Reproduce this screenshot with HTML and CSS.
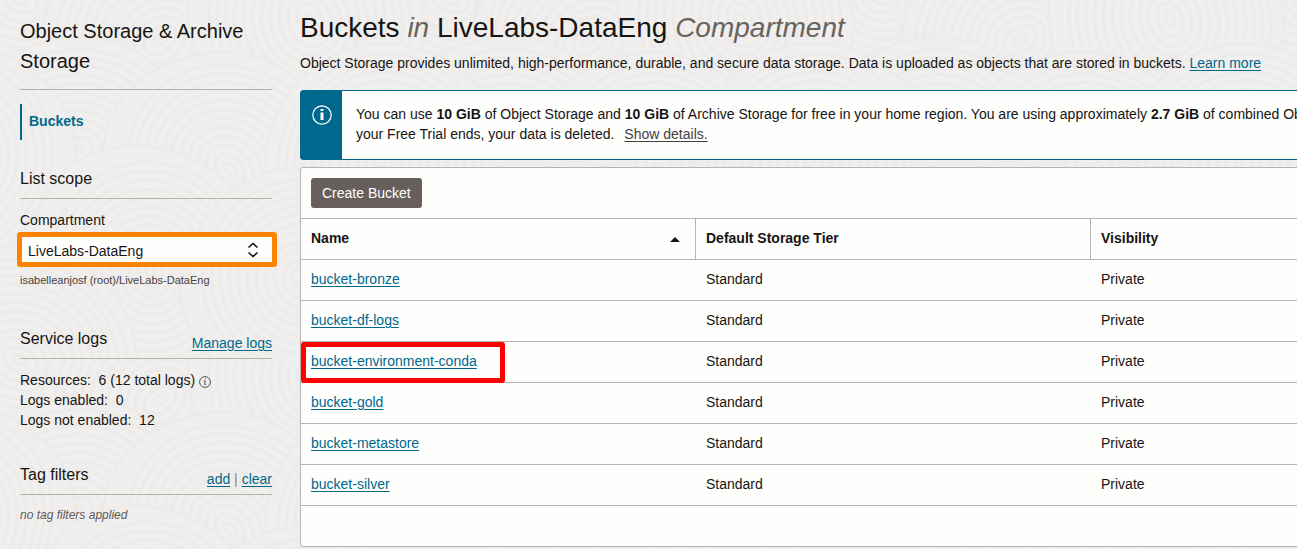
FILE: index.html
```html
<!DOCTYPE html>
<html lang="en">
<head>
<meta charset="utf-8">
<title>Object Storage buckets</title>
<link rel="stylesheet" href="styles.css">
</head>
<body>
<svg class="backdrop" aria-hidden="true">
  <defs>
    <g id="ripple" fill="none" stroke="#edebe9" stroke-width="3">
      <path fill="#f1efed" d="M-126 8C-120-70-60-118 10-112S124-50 118 20 60 128-10 120-132 70-126 8z"/>
      <ellipse rx="108" ry="100"/><ellipse rx="99" ry="92"/><ellipse rx="90" ry="84"/><ellipse rx="81" ry="75"/><ellipse rx="72" ry="66"/><ellipse rx="63" ry="57"/><ellipse rx="54" ry="48"/><ellipse rx="45" ry="39"/><ellipse rx="36" ry="30"/><ellipse rx="27" ry="21"/><ellipse rx="18" ry="12"/><ellipse rx="8" ry="4"/>
    </g>
    <pattern id="waves" width="430" height="360" patternUnits="userSpaceOnUse">
      <use href="#ripple" transform="translate(20 0) rotate(20)"/><use href="#ripple" transform="translate(450 0) rotate(20)"/>
      <use href="#ripple" transform="translate(160 40) rotate(-35)"/>
      <use href="#ripple" transform="translate(310 20) rotate(70)"/>
      <use href="#ripple" transform="translate(75 150) rotate(-15)"/><use href="#ripple" transform="translate(505 150) rotate(-15)"/>
      <use href="#ripple" transform="translate(230 170) rotate(50)"/>
      <use href="#ripple" transform="translate(380 160) rotate(-60)"/><use href="#ripple" transform="translate(-50 160) rotate(-60)"/>
      <use href="#ripple" transform="translate(150 270) rotate(80)"/>
      <use href="#ripple" transform="translate(310 280) rotate(10)"/>
      <use href="#ripple" transform="translate(20 360) rotate(20)"/><use href="#ripple" transform="translate(450 360) rotate(20)"/>
    </pattern>
  </defs>
  <rect width="100%" height="100%" fill="url(#waves)"/>
</svg>
<div class="layout">
  <aside class="sidebar">
    <h2 class="service-title">Object Storage &amp; Archive Storage</h2>
    <nav class="service-nav"><a class="nav-link" href="#">Buckets</a></nav>

    <section class="scope">
      <div class="section-head"><h3>List scope</h3></div>
      <label class="field-label" for="compartment">Compartment</label>
      <div class="select-box">
        <select id="compartment"><option>LiveLabs-DataEng</option></select>
        <svg class="chevrons" viewBox="0 0 12 16" aria-hidden="true"><path d="M1.500 5.500 6 1.500l4.500 4M1.500 10.500l4.500 4 4.500-4"/></svg>
      </div>
      <p class="path">isabelleanjosf (root)/LiveLabs-DataEng</p>
    </section>

    <section class="logs">
      <div class="section-head"><h3>Service logs</h3><div class="actions"><a href="#">Manage logs</a></div></div>
      <ul class="stats">
        <li>Resources:&nbsp; 6 (12 total logs)
          <svg class="info-small" viewBox="0 0 12 12" aria-hidden="true"><circle cx="6" cy="6" r="5.400"/><path d="M4.800 5h1.500L5.600 8.600h1.300M6 3h1"/></svg></li>
        <li>Logs enabled:&nbsp; 0</li>
        <li>Logs not enabled:&nbsp; 12</li>
      </ul>
    </section>

    <section class="tags">
      <div class="section-head"><h3>Tag filters</h3><div class="actions"><a href="#">add</a> <span class="bar">|</span> <a href="#">clear</a></div></div>
      <p class="empty">no tag filters applied</p>
    </section>
  </aside>

  <main class="content">
    <h1>Buckets <em>in</em> LiveLabs-DataEng <em>Compartment</em></h1>
    <p class="intro">Object Storage provides unlimited, high-performance, durable, and secure data storage. Data is uploaded as objects that are stored in buckets. <a href="#">Learn more</a></p>

    <div class="banner">
      <div class="banner-icon">
        <svg viewBox="0 0 20 20" aria-hidden="true"><circle cx="10" cy="10" r="9.200"/><path d="M10 7.500v7.500M10 4v2"/></svg>
      </div>
      <p class="banner-text">You can use <b>10 GiB</b> of Object Storage and <b>10 GiB</b> of Archive Storage for free in your home region. You are using approximately <b>2.7 GiB</b> of combined Object<br>your Free Trial ends, your data is deleted.<a class="details" href="#">Show details.</a></p>
    </div>

    <div class="panel">
      <div class="toolbar"><button class="create" type="button">Create Bucket</button></div>
      <table>
        <thead>
          <tr>
            <th scope="col"><div class="sortable">Name <svg class="sort" viewBox="0 0 10 5" aria-hidden="true"><path d="M0 5 5 0l5 5z"/></svg></div></th>
            <th scope="col">Default Storage Tier</th>
            <th scope="col">Visibility</th>
          </tr>
        </thead>
        <tbody>
          <tr><td><a href="#">bucket-bronze</a></td><td>Standard</td><td>Private</td></tr>
          <tr><td><a href="#">bucket-df-logs</a></td><td>Standard</td><td>Private</td></tr>
          <tr><td class="marked"><a href="#">bucket-environment-conda</a></td><td>Standard</td><td>Private</td></tr>
          <tr><td><a href="#">bucket-gold</a></td><td>Standard</td><td>Private</td></tr>
          <tr><td><a href="#">bucket-metastore</a></td><td>Standard</td><td>Private</td></tr>
          <tr><td><a href="#">bucket-silver</a></td><td>Standard</td><td>Private</td></tr>
        </tbody>
      </table>
      <div class="panel-foot"></div>
    </div>
  </main>
</div>
</body>
</html>
```
FILE: styles.css
```css
*, *::after { box-sizing: border-box; }

body {
  margin: 0;
  background: #f1efed;
  color: #161513;
  font: 14px/20px "Liberation Sans", Arial, sans-serif;
}

h1, h2, h3, p, ul { margin: 0; padding: 0; font-weight: 400; }
ul { list-style: none; }
a { color: #00688c; text-decoration: underline; text-underline-offset: 2px; }

.backdrop {
  position: absolute;
  inset: 0;
  width: 100%;
  height: 100%;
  z-index: -1;
}

.layout {
  display: grid;
  grid-template-columns: 252px minmax(0, 1fr);
  column-gap: 28px;
  padding-left: 20px;
  overflow: hidden;
}

.sidebar { padding-top: 16px; }

.service-title {
  font-size: 20px;
  line-height: 30px;
  padding-bottom: 13px;
  border-bottom: 1px solid #b5b1ad;
}

.service-nav { margin-top: 14px; }

.nav-link {
  display: block;
  padding: 7px 0 9px 7px;
  border-left: 2px solid #00688c;
  font-weight: 700;
  text-decoration: none;
}

.scope { margin-top: 29px; }

.section-head {
  display: flex;
  justify-content: space-between;
  border-bottom: 1px solid #b9b4aa;
}

.section-head h3 {
  font-size: 16px;
  line-height: 20px;
  padding-bottom: 9px;
}

.section-head .actions { padding-top: 4px; }
.bar { color: #8a8580; }

.field-label { display: block; margin-top: 11px; }

.select-box {
  display: grid;
  align-items: center;
  margin: 2px -5px 0 -3px;
  border: 5px solid #ff8200;
  border-radius: 3px;
  background: #fefefd;
}

.select-box select,
.chevrons { grid-area: 1 / 1; }

.select-box select {
  appearance: none;
  width: 100%;
  height: 25px;
  padding: 2px 6px 0;
  border: 0;
  background: transparent;
  color: inherit;
  font: inherit;
}

.chevrons {
  justify-self: end;
  width: 12px;
  height: 16px;
  margin-right: 13px;
  fill: none;
  stroke: #161513;
  stroke-width: 1.6;
  pointer-events: none;
}

.path { margin-top: 4px; font-size: 11px; line-height: 18px; color: #45413d; }

.logs { margin-top: 40px; }
.stats { margin-top: 11px; }

.info-small {
  width: 12px;
  height: 12px;
  vertical-align: -3px;
  fill: none;
  stroke: #55504c;
  stroke-width: 1;
}

.tags { margin-top: 35px; }
.empty { margin-top: 10px; font-size: 12px; font-style: italic; color: #5f5a56; }

.content { padding-top: 12px; }

h1 { font-size: 28px; line-height: 32px; white-space: nowrap; }
h1 em { color: #68635f; }
.intro { margin-top: 9px; white-space: nowrap; }

.banner {
  display: flex;
  min-width: 1187px;
  margin-top: 17px;
  border: 1px solid #00688c;
  border-radius: 3px;
  background: #fefefd;
}

.banner-icon { width: 41px; padding: 14px 0 0 11px; background: #00688c; }

.banner-icon svg {
  display: block;
  width: 20px;
  height: 20px;
  fill: none;
  stroke: #fff;
  stroke-width: 1.2;
}

.banner-icon path { stroke-width: 3; }
.banner-text { padding: 13px 14px 15px; white-space: nowrap; }
.details { margin-left: 10px; color: #45413d; }

.panel {
  min-width: 1187px;
  margin-top: 7px;
  border: 1px solid #b5b4b1;
  border-radius: 3px;
  background: #fefefd;
}

.toolbar { padding: 10px; }

.create {
  display: block;
  height: 30px;
  padding: 0 11px;
  border: 0;
  border-radius: 3px;
  background: #675f5b;
  color: #fff;
  font: inherit;
}

table { width: 100%; table-layout: fixed; border-collapse: separate; border-spacing: 0; }

th, td { height: 41px; padding: 0 10px 2px; text-align: left; border-bottom: 1px solid #b5b4b1; }
th { height: 42px; border-top: 1px solid #b5b4b1; border-right: 1px solid #b5b4b1; }
tbody td { position: relative; }

.sortable { display: flex; align-items: center; justify-content: space-between; }
.sort { width: 10px; height: 5px; margin: 2px 5px 0 0; fill: #161513; }

.marked::after {
  content: "";
  position: absolute;
  inset: 0 auto -1px 0;
  width: 204px;
  border: 5px solid #ff0000;
  border-radius: 3px;
  pointer-events: none;
}

.panel-foot { height: 40px; }
```
